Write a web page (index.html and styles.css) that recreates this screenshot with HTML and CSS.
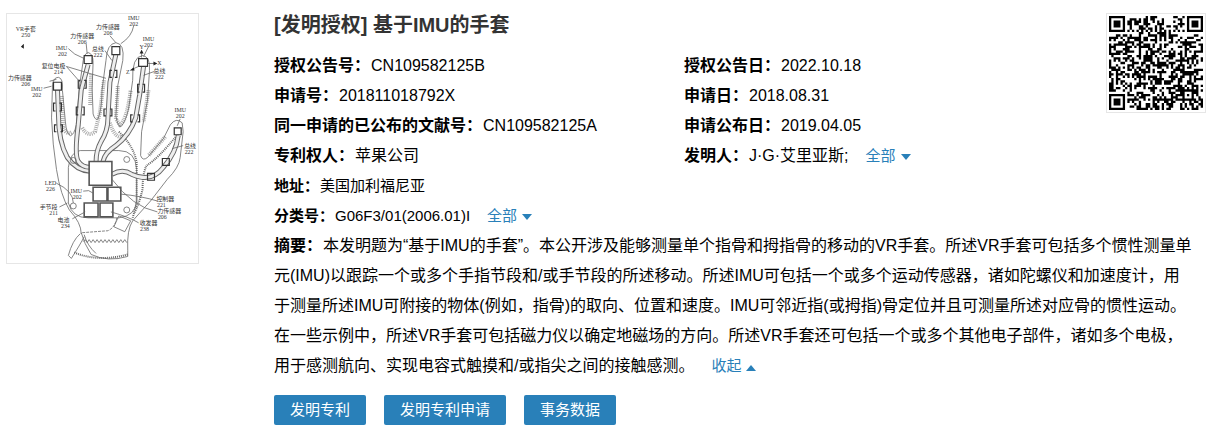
FILE: index.html
```html
<!DOCTYPE html>
<html lang="zh-CN">
<head>
<meta charset="utf-8">
<title>基于IMU的手套</title>
<link rel="stylesheet" href="styles.css">
</head>
<body>
<article class="patent">
  <svg class="figure" viewBox="6 13 193 252" role="img" aria-label="手套附图">
    <g class="line">
      <!-- stitched finger edges -->
      <path class="stitch" d="M61 96L63 128Q66 136 72 132M91 74L90 106M82 128Q88 138 95 132L100 112L104 80M118 86L116 119L120 125Q127 121 131 90M110 123Q115 140 125 137M149 90L144 122M166 137L149 156"/>
      <!-- hand outline -->
      <path d="M52 84Q53 77 58 77Q63 78 62 90L65 122Q66 134 70 136Q74 135 76 125L79 88L83 60Q84 53 88 52Q93 53 93 62L92 88L93 114Q95 121 98 119Q102 108 102 90L106 60Q107 43 116 42Q125 43 123 60L118 85L116 116Q118 127 121 127Q126 122 129 108L133 80Q132 56 143 55Q151 56 150 70L148 100L142 132L141 156Q143 162 148 158L164 139L171 125Q177 117 183 123L184 132L181 158Q180 168 168 180L151 202L133 222Q127 231 128 252"/>
      <path d="M52 84L51 118Q52 145 56 170Q60 196 69 211Q81 224 81 235"/>
      <path d="M81 234Q84 245 91 256Q108 264 128 258V252M84 236Q87 247 96 255"/>
      <path d="M80 235Q72 242 68 257L71 260Q80 246 84 238"/>
      <path class="dash" d="M82 234L108 232Q115 229 117 219"/>
      <path class="dots" d="M74 254Q98 264 128 256"/>
      <path d="M83 243l2 -2 2 3 2-3 2 3 2-3 2 3 2-3 2 3 2-3 2 3 2-3 2 3 2-3 2 3 2-3 2 3 2-3 2 3 2-3 2 3 2-3 2 3"/>
      <!-- palm plate -->
      <path d="M68 168V204Q72 219 88 219H119Q136 217 137 202V170Q136 151 119 151H80Q70 152 68 168Z"/>
      <path d="M119 217l12 5-6 11-11-5Z"/>
      <path class="dots" d="M119 132Q134 146 137 163V204L133 219M179 134Q158 160 147 166Q143 174 143 190Q139 207 134 215"/>
    </g>
    <g class="bus-edge"><path d="M57 89L58 115Q58 142 67 158Q76 171 90 172M88 64L81 90L78 125Q74 155 78 162Q82 168 90 168M116 54L110 82L108 118Q108 131 101 142Q96 151 96 162M144 66L140 95L136 118Q130 135 116 146Q105 153 103 162M112 175Q123 169 132 175Q152 184 164 168Q177 153 179 136"/></g>
    <g class="bus-core"><path d="M57 89L58 115Q58 142 67 158Q76 171 90 172M88 64L81 90L78 125Q74 155 78 162Q82 168 90 168M116 54L110 82L108 118Q108 131 101 142Q96 151 96 162M144 66L140 95L136 118Q130 135 116 146Q105 153 103 162M112 175Q123 169 132 175Q152 184 164 168Q177 153 179 136"/></g>
    <g class="module">
      <path class="sensor" d="M53 82h8v8h-8ZM84 55h8v8h-8ZM112 46h8v8h-8ZM139 58h9v8h-9ZM175 128h7v7h-7Z"/>
      <path d="M55 103h-2v8h2M59 103h2v8h-2M56 125h-2v7h2M60 125h2v7h-2M80 80h-2v8h2M84 80h2v8h-2M78 107h-2v8h2M82 107h2v8h-2M112 70h-2v7h2M115 70h2v7h-2M106 109h-2v7h2M110 109h2v7h-2M140 84h-2v8h2M143 84h2v8h-2M133 115h-2v7h2M138 115h2v7h-2M163 159h7v7h-7ZM148 174h7v7h-7Z"/>
    </g>
    <g class="chip">
      <path d="M89 162h23v24H89ZM93 188h14v14H93ZM108 188h13v14h-13ZM84 204h14v14H84ZM100 204h13v14h-13Z"/>
    </g>
    <g class="line">
      <circle cx="73" cy="161" r="3"/><circle cx="73" cy="207" r="3"/><circle cx="127" cy="160" r="3"/><circle cx="127" cy="211" r="3"/>
      <path d="M49 81L56 79M43 88L51 86M68 48Q73 54 84 58M86 43L87 53M66 66L80 82M66 66L106 78M105 50L112 60M110 35L116 42M134 25Q132 36 121 43M149 46L144 56M155 71L144 75M181 119L178 126M184 146L173 149M83 192Q89 190 93 194M56 184Q73 192 73 204M59 208L67 204M72 220L85 213M158 202Q142 197 121 195M158 213Q133 208 112 180M139 224Q129 218 111 213"/>
      <path d="M142 57V50M148 63H156M139 66L132 69"/>
      <path class="arrow" d="M142 49l-2 4h4ZM158 63l-4-2v4ZM130 70l4-3 1 3ZM20 46l3-3v5Z"/>
    </g>
    <g class="caption">
      <text x="25" y="30">VR手套</text><text x="25" y="36">250</text>
      <text x="134" y="19">IMU</text><text x="134" y="25">202</text>
      <text x="108" y="28">力传感器</text><text x="108" y="34">206</text>
      <text x="82" y="37">力传感器</text><text x="82" y="43">206</text>
      <text x="61" y="49">IMU</text><text x="62" y="55">202</text>
      <text x="98" y="50">总线</text><text x="98" y="56">222</text>
      <text x="149" y="40">IMU</text><text x="149" y="46">202</text>
      <text x="53" y="68">复位电极</text><text x="58" y="74">214</text>
      <text x="19" y="80">力传感器</text><text x="25" y="86">206</text>
      <text x="36" y="91">IMU</text><text x="36" y="97">202</text>
      <text x="160" y="73">总线</text><text x="160" y="79">222</text>
      <text x="160" y="65">X</text><text x="142" y="48">Y</text><text x="128" y="74">Z</text>
      <text x="181" y="112">IMU</text><text x="181" y="118">202</text>
      <text x="191" y="148">总线</text><text x="190" y="154">222</text>
      <text x="50" y="186">LED</text><text x="50" y="192">226</text>
      <text x="76" y="194">IMU</text><text x="77" y="200">202</text>
      <text x="48" y="210">手节段</text><text x="53" y="216">211</text>
      <text x="63" y="223">电池</text><text x="65" y="229">234</text>
      <text x="166" y="202">控制器</text><text x="162" y="208">221</text>
      <text x="170" y="214">力传感器</text><text x="163" y="220">206</text>
      <text x="149" y="226">收发器</text><text x="145" y="232">238</text>
    </g>
  </svg>

  <div class="info">
    <div class="top">
      <div class="summary">
        <h1 class="title">[发明授权] 基于IMU的手套</h1>
        <dl class="fields">
          <div class="field"><dt>授权公告号：</dt><dd>CN109582125B</dd></div>
          <div class="field"><dt>授权公告日：</dt><dd>2022.10.18</dd></div>
          <div class="field"><dt>申请号：</dt><dd>201811018792X</dd></div>
          <div class="field"><dt>申请日：</dt><dd>2018.08.31</dd></div>
          <div class="field"><dt>同一申请的已公布的文献号：</dt><dd>CN109582125A</dd></div>
          <div class="field"><dt>申请公布日：</dt><dd>2019.04.05</dd></div>
          <div class="field"><dt>专利权人：</dt><dd>苹果公司</dd></div>
          <div class="field"><dt>发明人：</dt><dd>J·G·艾里亚斯;<a class="toggle down" href="#">全部</a></dd></div>
        </dl>
      </div>
      <svg class="qr" viewBox="0 0 41 41" role="img" aria-label="二维码"><path id="qr-modules"/></svg>
    </div>
    <dl class="details">
      <div class="field small"><dt>地址：</dt><dd>美国加利福尼亚</dd></div>
      <div class="field small"><dt>分类号：</dt><dd>G06F3/01(2006.01)I<a class="toggle down" href="#">全部</a></dd></div>
      <div class="field abstract"><dt>摘要：</dt><dd>本发明题为“基于IMU的手套”。本公开涉及能够测量单个指骨和拇指骨的移动的VR手套。所述VR手套可包括多个惯性测量单元(IMU)以跟踪一个或多个手指节段和/或手节段的所述移动。所述IMU可包括一个或多个运动传感器，诸如陀螺仪和加速度计，用于测量所述IMU可附接的物体(例如，指骨)的取向、位置和速度。IMU可邻近指(或拇指)骨定位并且可测量所述对应骨的惯性运动。在一些示例中，所述VR手套可包括磁力仪以确定地磁场的方向。所述VR手套还可包括一个或多个其他电子部件，诸如多个电极，用于感测航向、实现电容式触摸和/或指尖之间的接触感测。<a class="toggle up" href="#">收起</a></dd></div>
    </dl>
    <div class="actions">
      <button type="button" class="btn">发明专利</button>
      <button type="button" class="btn">发明专利申请</button>
      <button type="button" class="btn">事务数据</button>
    </div>
  </div>
</article>
<script src="qr.js"></script>
</body>
</html>
```

FILE: styles.css
```css
* { box-sizing: border-box; }

body {
  margin: 0;
  background: #fff;
  color: #000;
  font: 16px/30px "Liberation Sans", "Noto Sans CJK SC", sans-serif;
}

.patent {
  display: grid;
  grid-template-columns: 193px minmax(0, 1fr);
  column-gap: 75px;
  align-items: start;
  padding: 13px 3px 22px 6px;
}

.figure {
  display: block;
  width: 100%;
  border: 1px solid #e6e6e6;
}

.line { fill: none; stroke: #666; stroke-width: 0.8; }
.dash { stroke-dasharray: 3 1; }
.dots { stroke-width: 2; stroke-dasharray: 1 1; }
.stitch { stroke: #aaa; stroke-width: 4; stroke-dasharray: 1 1; }
.arrow { fill: #222; stroke: none; }
.bus-edge { fill: none; stroke: #666; stroke-width: 5; }
.bus-core { fill: none; stroke: #eee; stroke-width: 3; }
.module { fill: none; stroke: #333; stroke-width: 1.2; }
.sensor { fill: #fff; }
.chip { fill: #fff; stroke: #555; stroke-width: 1.6; }

.caption {
  fill: #333;
  font: 6px "Liberation Serif", "Noto Sans CJK SC", serif;
  text-anchor: middle;
}

.top {
  display: flex;
  align-items: flex-start;
  gap: 20px;
}

.summary { flex: 1; }

.title {
  margin: 0;
  padding-bottom: 13px;
  color: #333;
  font-size: 20px;
  line-height: 25px;
}

.fields {
  display: grid;
  grid-template-columns: 1fr 1fr;
  column-gap: 8px;
  margin: 0;
}

.details { margin: 0; }

.field dt, .field dd { display: inline; margin: 0; }
.field dt { margin-right: 1px; font-weight: bold; }
.small { font-size: 15px; }
.abstract { padding: 0 12px 0 0; }

.qr {
  flex: none;
  width: 100px;
  height: 100px;
  padding: 2px;
  border: 1px solid #e6e6e6;
}

.toggle {
  margin-left: 17px;
  color: #2980b9;
  font-size: 15px;
  text-decoration: none;
  white-space: nowrap;
}

.toggle::after {
  content: "";
  display: inline-block;
  margin-left: 5px;
  border: 5px solid transparent;
}

.down::after { border-top: 6px solid #2980b9; border-bottom: 0; vertical-align: 1px; }
.up::after { border-bottom: 6px solid #2980b9; border-top: 0; vertical-align: 0; }

.actions {
  display: flex;
  gap: 18px;
  padding-top: 14px;
}

.btn {
  height: 30px;
  padding: 0 16px;
  border: 0;
  border-radius: 2px;
  background: #2980b9;
  color: #fff;
  font: 15px/30px "Liberation Sans", "Noto Sans CJK SC", sans-serif;
}
```

FILE: qr.js
```js
// QR code, version 6, error correction H, byte mode.
(function () {
  var SIZE = 41, EC = 28, BLOCK = 15, COUNT = 4, ALIGN = 34;
  var text = "https://epub.cnipa.gov.cn/patent/CN109582125B";

  function mul(a, b) {
    var z = 0;
    for (var i = 7; i >= 0; i--) {
      z = (z << 1) ^ ((z >>> 7) * 0x11d);
      z ^= ((b >>> i) & 1) * a;
    }
    return z;
  }

  var gen = new Array(EC).fill(0), root = 1;
  gen[EC - 1] = 1;
  for (var g = 0; g < EC; g++) {
    for (var k = 0; k < EC; k++) {
      gen[k] = mul(gen[k], root);
      if (k + 1 < EC) gen[k] ^= gen[k + 1];
    }
    root = mul(root, 2);
  }

  function remainder(data) {
    var r = new Array(EC).fill(0);
    data.forEach(function (b) {
      var f = b ^ r.shift();
      r.push(0);
      gen.forEach(function (c, i) { r[i] ^= mul(c, f); });
    });
    return r;
  }

  var bits = "0100" + text.length.toString(2).padStart(8, "0");
  for (var c of text) bits += c.charCodeAt(0).toString(2).padStart(8, "0");
  bits += "0000";
  var bytes = bits.match(/.{8}/g).map(function (s) { return parseInt(s, 2); });
  for (var pad = 0xec; bytes.length < BLOCK * COUNT; pad ^= 0xec ^ 0x11) bytes.push(pad);
  var blocks = [], out = [], i;
  for (i = 0; i < COUNT; i++) blocks.push(bytes.slice(i * BLOCK, (i + 1) * BLOCK));
  var ecs = blocks.map(remainder);
  for (i = 0; i < BLOCK; i++) blocks.forEach(function (b) { out.push(b[i]); });
  for (i = 0; i < EC; i++) ecs.forEach(function (b) { out.push(b[i]); });

  var masks = [
    function (x, y) { return (x + y) % 2; },
    function (x, y) { return y % 2; },
    function (x) { return x % 3; },
    function (x, y) { return (x + y) % 3; },
    function (x, y) { return (Math.floor(x / 3) + Math.floor(y / 2)) % 2; },
    function (x, y) { return x * y % 2 + x * y % 3; },
    function (x, y) { return (x * y % 2 + x * y % 3) % 2; },
    function (x, y) { return ((x + y) % 2 + x * y % 3) % 2; }
  ];

  function build(mask) {
    var m = [], fixed = [], x, y;
    for (y = 0; y < SIZE; y++) { m.push(new Array(SIZE).fill(0)); fixed.push(new Array(SIZE).fill(0)); }
    function put(x, y, v) {
      if (x < 0 || y < 0 || x >= SIZE || y >= SIZE) return;
      m[y][x] = v ? 1 : 0; fixed[y][x] = 1;
    }
    for (x = 0; x < SIZE; x++) { put(6, x, x % 2 === 0); put(x, 6, x % 2 === 0); }
    [[3, 3], [SIZE - 4, 3], [3, SIZE - 4]].forEach(function (p) {
      for (var dy = -4; dy <= 4; dy++) for (var dx = -4; dx <= 4; dx++) {
        var d = Math.max(Math.abs(dx), Math.abs(dy));
        put(p[0] + dx, p[1] + dy, d !== 2 && d !== 4);
      }
    });
    for (y = -2; y <= 2; y++) for (x = -2; x <= 2; x++) put(ALIGN + x, ALIGN + y, Math.max(Math.abs(x), Math.abs(y)) !== 1);

    var data = 2 << 3 | mask, rem = data, i;
    for (i = 0; i < 10; i++) rem = (rem << 1) ^ ((rem >>> 9) * 0x537);
    var f = (data << 10 | rem) ^ 0x5412;
    function bit(i) { return (f >>> i) & 1; }
    for (i = 0; i <= 5; i++) put(8, i, bit(i));
    put(8, 7, bit(6)); put(8, 8, bit(7)); put(7, 8, bit(8));
    for (i = 9; i < 15; i++) put(14 - i, 8, bit(i));
    for (i = 0; i < 8; i++) put(SIZE - 1 - i, 8, bit(i));
    for (i = 8; i < 15; i++) put(8, SIZE - 15 + i, bit(i));
    put(8, SIZE - 8, 1);

    var n = 0;
    for (var right = SIZE - 1; right >= 1; right -= 2) {
      if (right === 6) right = 5;
      for (var v = 0; v < SIZE; v++) for (var j = 0; j < 2; j++) {
        x = right - j;
        y = ((right + 1) & 2) === 0 ? SIZE - 1 - v : v;
        if (fixed[y][x]) continue;
        var b = n < out.length * 8 ? (out[n >> 3] >>> (7 - (n & 7))) & 1 : 0;
        n++;
        m[y][x] = b ^ (masks[mask](x, y) === 0 ? 1 : 0);
      }
    }
    return m;
  }

  function penalty(m) {
    var score = 0, dark = 0;
    var cols = m.map(function (_, i) { return m.map(function (r) { return r[i]; }); });
    m.concat(cols).forEach(function (r) {
      var s = r.join("");
      (s.match(/0{5,}|1{5,}/g) || []).forEach(function (t) { score += t.length - 2; });
      var p = "0000" + s + "0000";
      for (var i = 0; i + 11 <= p.length; i++) {
        var w = p.substr(i, 11);
        if (w === "10111010000" || w === "00001011101") score += 40;
      }
    });
    for (var y = 0; y < SIZE; y++) for (var x = 0; x < SIZE; x++) {
      dark += m[y][x];
      if (x && y && m[y][x] === m[y - 1][x] && m[y][x] === m[y][x - 1] && m[y][x] === m[y - 1][x - 1]) score += 3;
    }
    return score + Math.floor(Math.abs(dark * 20 / (SIZE * SIZE) - 10)) * 10;
  }

  var best = null, low = Infinity;
  for (var k2 = 0; k2 < 8; k2++) {
    var m = build(k2), p = penalty(m);
    if (p < low) { low = p; best = m; }
  }
  var d = "";
  best.forEach(function (row, y) {
    row.forEach(function (v, x) { if (v) d += "M" + x + " " + y + "h1v1h-1z"; });
  });
  document.getElementById("qr-modules").setAttribute("d", d);
})();
```
